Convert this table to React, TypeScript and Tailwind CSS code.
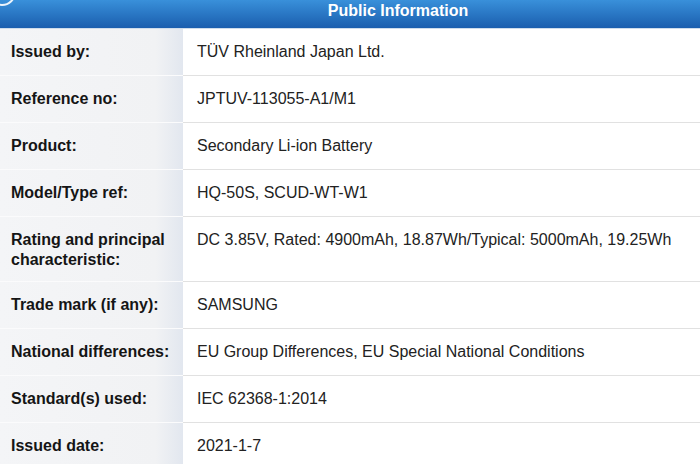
const rows: { label: string[]; value: string }[] = [
  { label: ['Issued by:'], value: 'TÜV Rheinland Japan Ltd.' },
  { label: ['Reference no:'], value: 'JPTUV-113055-A1/M1' },
  { label: ['Product:'], value: 'Secondary Li-ion Battery' },
  { label: ['Model/Type ref:'], value: 'HQ-50S, SCUD-WT-W1' },
  {
    label: ['Rating and principal', 'characteristic:'],
    value: 'DC 3.85V, Rated: 4900mAh, 18.87Wh/Typical: 5000mAh, 19.25Wh',
  },
  { label: ['Trade mark (if any):'], value: 'SAMSUNG' },
  { label: ['National differences:'], value: 'EU Group Differences, EU Special National Conditions' },
  { label: ['Standard(s) used:'], value: 'IEC 62368-1:2014' },
  { label: ['Issued date:'], value: '2021-1-7' },
];

export default function App() {
  return (
    <div
      className="w-[700px] h-[464px] overflow-hidden bg-white"
      style={{ fontFamily: '"Liberation Sans", Arial, sans-serif' }}
    >
      {/* Header */}
      <div className="relative h-[29px] bg-linear-to-b from-[#3990da] to-[#1b5eae] border-b border-[#cfdceb]">
        <svg className="absolute left-0 top-0" width="20" height="12" viewBox="0 0 20 12">
          <circle cx="2" cy="-8" r="13" fill="none" stroke="#ffffff" strokeWidth="2" opacity="0.9" />
        </svg>
        <div className="pl-[96px] text-center text-white font-bold text-[16px] leading-[20px] pt-[1px]">
          Public Information
        </div>
      </div>

      {/* Rows */}
      <div className="flex flex-col">
        {rows.map((r, i) => (
          <div key={i} className={'flex ' + (r.label.length > 1 ? 'h-[65px]' : 'h-[47px]')}>
            <div className="w-[183px] shrink-0 bg-linear-to-r from-[#f4f5f7] via-[#f1f2f4] via-85% to-[#e2e7ef] border-b border-[#fbfbfc] pl-[11px] pt-[13px]">
              {r.label.map((l, j) => (
                <div key={j} className="text-[16px] leading-[20px] font-bold text-[#151515] whitespace-nowrap">
                  {l}
                </div>
              ))}
            </div>
            <div className="flex-1 border-b border-[#e1e1e1] pl-[14px] pt-[13px] text-[16px] leading-[20px] text-[#222] whitespace-nowrap">
              {r.value}
            </div>
          </div>
        ))}
      </div>
    </div>
  );
}
